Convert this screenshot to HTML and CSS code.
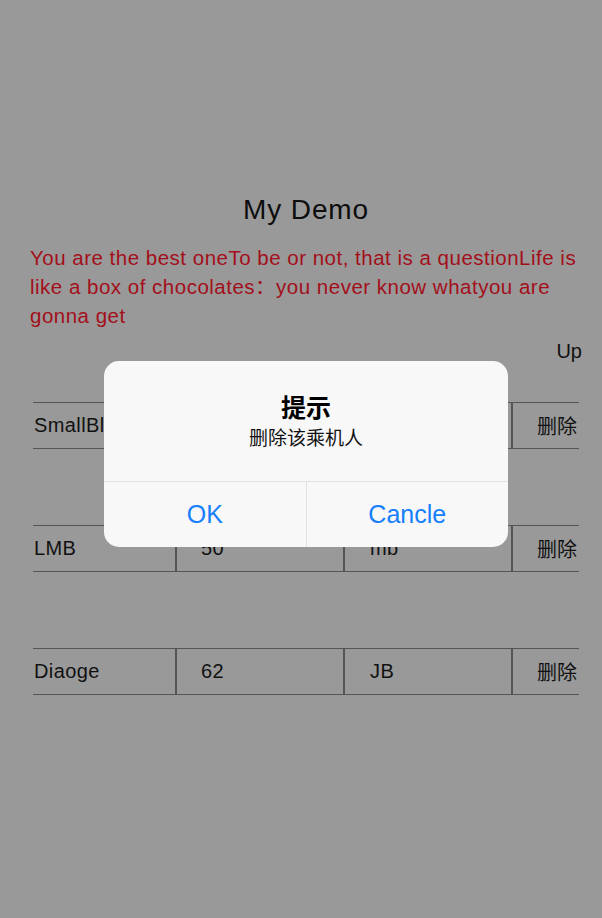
FILE: index.html
```html
<!DOCTYPE html>
<html lang="zh-CN">
<head>
<meta charset="utf-8">
<title>My Demo</title>
<link rel="stylesheet" href="styles.css">
</head>
<body>
<div class="page">
  <h1 class="title">My Demo</h1>
  <p class="quote">You are the best oneTo be or not, that is a questionLife is like a box of chocolates：you never know whatyou are gonna get</p>
  <div class="up">Up</div>
  <div class="list">
    <div class="row">
      <div class="cell c1">SmallBlack</div>
      <div class="cell c2">18</div>
      <div class="cell c3">sb</div>
      <div class="cell c4">删除</div>
    </div>
    <div class="row">
      <div class="cell c1">LMB</div>
      <div class="cell c2">50</div>
      <div class="cell c3">mb</div>
      <div class="cell c4">删除</div>
    </div>
    <div class="row">
      <div class="cell c1">Diaoge</div>
      <div class="cell c2">62</div>
      <div class="cell c3">JB</div>
      <div class="cell c4">删除</div>
    </div>
  </div>
</div>
<div class="alert">
  <div class="alert-body">
    <div class="alert-title">提示</div>
    <div class="alert-msg">删除该乘机人</div>
  </div>
  <div class="alert-actions">
    <div class="alert-btn">OK</div>
    <div class="alert-btn">Cancle</div>
  </div>
</div>
</body>
</html>
```

FILE: styles.css
```css
html, body {
  margin: 0;
  padding: 0;
  background: #999999;
}
body {
  width: 602px;
  height: 918px;
  position: relative;
  overflow: hidden;
  font-family: "Liberation Sans", "Noto Sans CJK SC", sans-serif;
  color: #111;
}
.page {
  display: flex;
  flex-direction: column;
  padding-top: 194px;
}
.title {
  margin: 0;
  font-size: 28px;
  font-weight: normal;
  line-height: 32px;
  letter-spacing: 0.9px;
  text-align: center;
  padding-left: 10px;
  color: #0d0d0d;
}
.quote {
  margin: 17px 20px 0 30px;
  font-size: 20.5px;
  line-height: 29px;
  letter-spacing: 0.5px;
  color: #a30f1a;
}
.up {
  margin-top: 9px;
  padding-right: 20px;
  text-align: right;
  font-size: 20px;
  line-height: 24px;
}
.list {
  display: flex;
  flex-direction: column;
  gap: 76px;
  margin: 39px 23px 0 33px;
}
.row {
  display: flex;
  height: 45px;
  border-top: 1px solid #555;
  border-bottom: 1px solid #555;
}
.cell {
  font-size: 20px;
  line-height: 45px;
  letter-spacing: 0.4px;
  white-space: nowrap;
  overflow: hidden;
}
.c1 { width: 141px; padding-left: 1px; }
.c2, .c3, .c4 { border-left: 2px solid #555; }
.c2 { width: 142px; padding-left: 24px; }
.c3 { width: 141px; padding-left: 25px; }
.c4 { width: 42px; padding-left: 24px; letter-spacing: 0; font-family: "Noto Sans CJK SC", sans-serif; }

.alert {
  position: absolute;
  left: 104px;
  top: 361px;
  width: 404px;
  height: 186px;
  background: #f8f8f8;
  border-radius: 15px;
  display: flex;
  flex-direction: column;
  overflow: hidden;
}
.alert-body {
  height: 120px;
  display: flex;
  flex-direction: column;
  align-items: center;
  padding-top: 28px;
  box-sizing: border-box;
  font-family: "Noto Sans CJK SC", sans-serif;
}
.alert-title {
  font-size: 25px;
  font-weight: bold;
  line-height: 34px;
  color: #000;
}
.alert-msg {
  font-size: 19px;
  line-height: 27px;
  color: #111;
}
.alert-actions {
  display: flex;
  flex: 1;
  border-top: 1px solid #e2e2e2;
}
.alert-btn {
  flex: 1;
  display: flex;
  align-items: center;
  justify-content: center;
  font-size: 25px;
  color: #167ffb;
}
.alert-btn + .alert-btn {
  border-left: 1px solid #e2e2e2;
}
```
